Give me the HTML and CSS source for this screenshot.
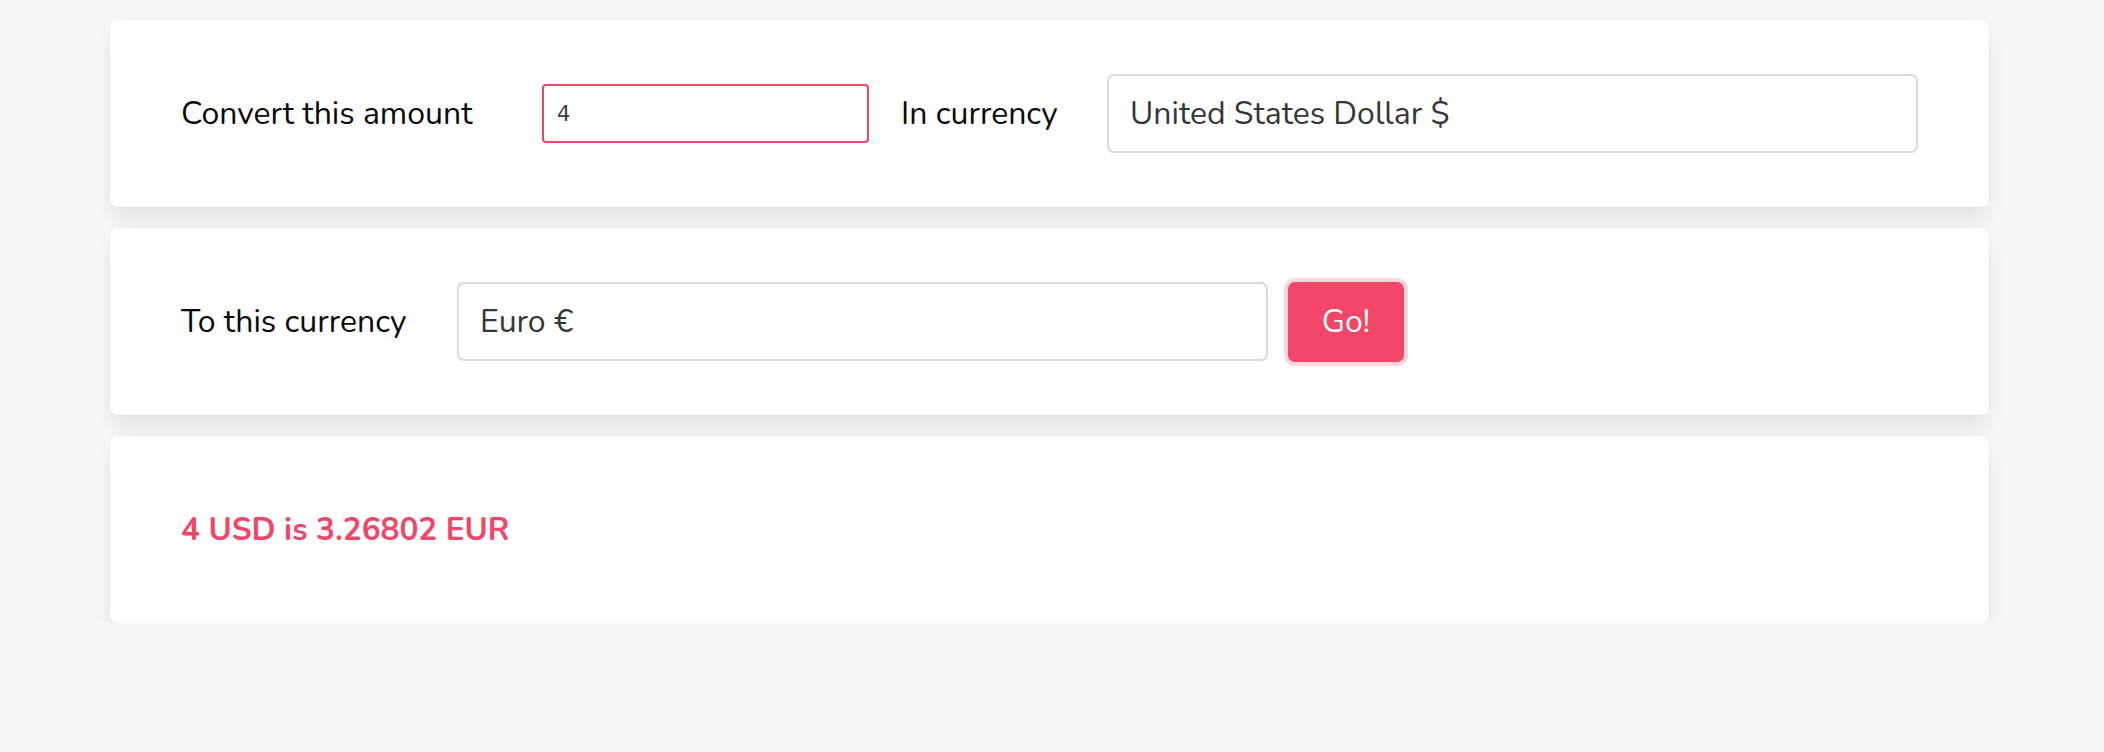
FILE: index.html
```html
<!DOCTYPE html>
<html lang="en">
<head>
<meta charset="utf-8">
<title>Currency converter</title>
<link rel="stylesheet" href="styles.css">
</head>
<body>
<main class="page">
  <section class="card">
    <div class="field-label label-amount">Convert this amount</div>
    <div class="amount-input"><span class="amount-value">4</span></div>
    <div class="field-label label-in">In currency</div>
    <div class="select select-from">United States Dollar $</div>
  </section>
  <section class="card">
    <div class="field-label label-to">To this currency</div>
    <div class="select select-to">Euro €</div>
    <button class="go-button" type="button">Go!</button>
  </section>
  <section class="card">
    <div class="result">4 USD is 3.26802 EUR</div>
  </section>
</main>
</body>
</html>
```
FILE: styles.css
```css
html, body {
  margin: 0;
  padding: 0;
  background: #f7f7f7;
}

body {
  font-family: "Nunito", "Open Sans", "Noto Sans", sans-serif;
  color: #0a0a0a;
}

.page {
  width: 1879px;
  margin-left: 110px;
  padding-top: 20px;
  display: flex;
  flex-direction: column;
  gap: 21px;
}

.card {
  box-sizing: border-box;
  height: 187px;
  background: #fff;
  border-radius: 8px;
  box-shadow: 0 12px 24px -3px rgba(10, 10, 10, 0.1), 0 0 0 1px rgba(10, 10, 10, 0.02);
  padding: 0 71px;
  display: flex;
  align-items: center;
}

.field-label {
  font-size: 32px;
  line-height: 1;
  white-space: nowrap;
  flex: none;
}

.label-amount { width: 361px; }
.label-in { width: 206px; margin-left: 32px; }
.label-to { width: 276px; }

.amount-input {
  box-sizing: border-box;
  width: 327px;
  height: 59px;
  border: 2px solid #f14668;
  border-radius: 4px;
  display: flex;
  align-items: center;
  padding-left: 13px;
  flex: none;
}

.amount-value {
  font-family: "DejaVu Sans", sans-serif;
  font-size: 21px;
  color: #3d3d3d;
}

.select {
  box-sizing: border-box;
  height: 79px;
  border: 2px solid #dbdbdb;
  border-radius: 7px;
  display: flex;
  align-items: center;
  padding-left: 21px;
  font-size: 32px;
  color: #363636;
  white-space: nowrap;
}

.select-from { flex: 1; }
.select-to { width: 811px; flex: none; }

.go-button {
  box-sizing: border-box;
  margin-left: 20px;
  width: 116px;
  height: 80px;
  border: none;
  border-radius: 7px;
  background: #f14668;
  color: #fff;
  font-family: inherit;
  font-size: 32px;
  box-shadow: 0 0 0 4px rgba(241, 70, 104, 0.22);
  cursor: pointer;
}

.result {
  font-size: 31.5px;
  font-weight: 700;
  color: #f14668;
  white-space: nowrap;
}
```
